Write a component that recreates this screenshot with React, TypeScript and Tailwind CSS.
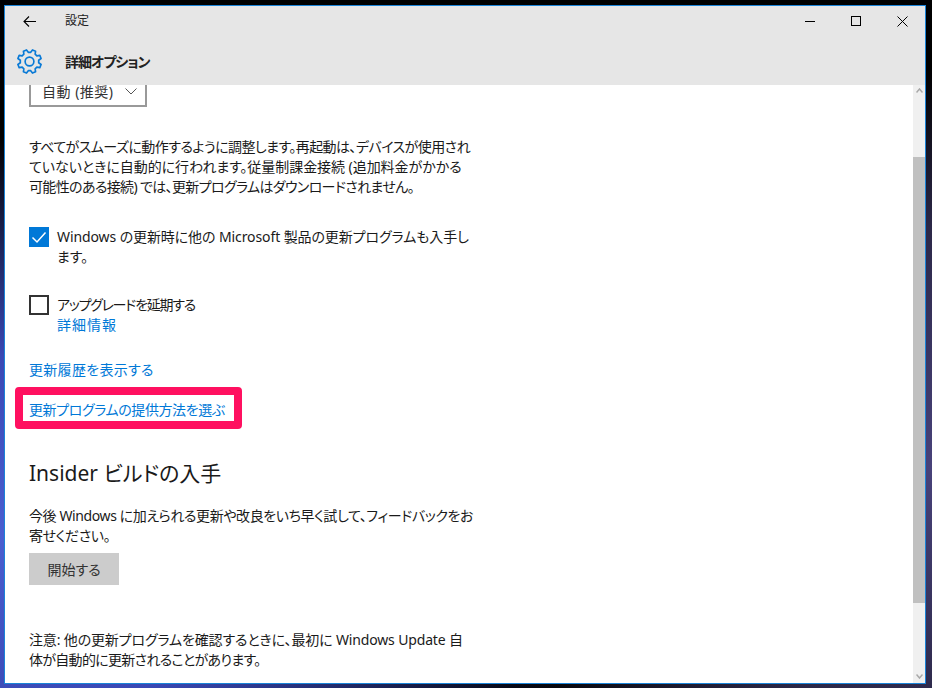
// 8 teeth, each with a flat top
const gearPoints = Array.from({ length: 8 }, (_, i) => {
  const a = i * 45 + 22.5;
  return [
    [a - 15, 8.9],
    [a - 8, 11.5],
    [a + 8, 11.5],
    [a + 15, 8.9],
  ]
    .map(([deg, r]) => {
      const rad = (deg * Math.PI) / 180;
      return `${(12 + r * Math.cos(rad)).toFixed(2)},${(12 + r * Math.sin(rad)).toFixed(2)}`;
    })
    .join(' ');
}).join(' ');

const linkClass = 'block whitespace-nowrap leading-5 text-[#0078d7]';

function Gear() {
  return (
    <svg width="25" height="25" viewBox="0 0 24 24" fill="none" stroke="#0a7ad6" strokeWidth="1.6" strokeLinejoin="round">
      <polygon points={gearPoints} />
      <circle cx="12" cy="12" r="4.2" />
    </svg>
  );
}

function Chevron({ up = false, w = 7, h = 5, color = '#a8a8a8', sw = 1.5 }: { up?: boolean; w?: number; h?: number; color?: string; sw?: number }) {
  return (
    <svg width={w} height={h} viewBox={`0 0 ${w} ${h}`} fill="none" stroke={color} strokeWidth={sw}>
      <polyline points={up ? `0.5,${h - 0.5} ${w / 2},1 ${w - 0.5},${h - 0.5}` : `0.5,0.5 ${w / 2},${h - 1} ${w - 0.5},0.5`} />
    </svg>
  );
}

export default function App() {
  return (
    <div className="h-[688px] w-[932px] overflow-hidden bg-black bg-[radial-gradient(ellipse_600px_400px_at_0%_78%,#4a5ed0_0%,#3a48b4_45%,transparent_100%),radial-gradient(ellipse_500px_400px_at_100%_68%,#48427a_0%,#2c2848_60%,transparent_100%)] pt-[5px] pb-[4px] pl-[4px] pr-[6px] font-['Noto_Sans','Noto_Sans_CJK_JP',sans-serif] text-[14px] text-[#1a1a1a] [font-feature-settings:'palt']">
      <div className="flex h-[679px] w-[922px] flex-col border border-[#1a84d8] bg-white">
        <header className="h-[79px] shrink-0 bg-[#e6e6e6]">
          <div className="flex h-[30px] items-center">
            <div className="flex w-[60px] justify-center pr-[12px] pl-[1px]">
              <svg width="13" height="11" viewBox="0 0 13 11" fill="none" stroke="#000" strokeWidth="1.1">
                <path d="M13 5.5H1M6 0.5L1 5.5L6 10.5" />
              </svg>
            </div>
            <span className="text-[12px] text-[#222]">設定</span>
            <div className="ml-auto flex items-center">
              <div className="flex w-[46px] justify-center">
                <div className="h-px w-[10px] bg-black" />
              </div>
              <div className="flex w-[46px] justify-center">
                <div className="h-[10px] w-[10px] border border-black" />
              </div>
              <div className="flex w-[46px] justify-center">
                <svg width="11" height="11" viewBox="0 0 11 11" stroke="#000" strokeWidth="1">
                  <path d="M0.5 0.5L10.5 10.5M10.5 0.5L0.5 10.5" />
                </svg>
              </div>
            </div>
          </div>
          <div className="mt-[10px] flex h-[30px] items-center">
            <div className="flex w-[60px] justify-center pr-[13px] pl-[1px]">
              <Gear />
            </div>
            <span className="font-bold tracking-[-1px] text-[#222]">詳細オプション</span>
          </div>
        </header>
        <div className="flex min-h-0 flex-1">
          <main className="min-w-0 flex-1 overflow-hidden pl-[24px]">
            <div className="-mt-[10px] flex h-[32px] w-[118px] items-center gap-[11px] border-2 border-[#999] pt-[1px] pl-[11px]">
              <span className="whitespace-nowrap tracking-[0.5px] text-[#333]">自動 (推奨)</span>
              <Chevron w={12} h={7} color="#555" sw={1} />
            </div>
            <p className="mt-[30px] whitespace-nowrap leading-5">
              <span className="tracking-[-0.55px]">すべてがスムーズに動作するように調整します。再起動は、デバイスが使用され</span>
              <br />
              <span className="tracking-[-0.05px]">ていないときに自動的に行われます。従量制課金接続 (追加料金がかかる</span>
              <br />
              <span className="tracking-[-0.65px]">可能性のある接続) では、更新プログラムはダウンロードされません。</span>
            </p>
            <div className="mt-[30px] flex gap-[8px]">
              <div className="flex h-5 w-5 shrink-0 items-center justify-center bg-[#0078d7]">
                <svg width="20" height="20" viewBox="0 0 20 20" fill="none" stroke="#fff" strokeWidth="1.5">
                  <polyline points="3.5,10.5 8,15 16.5,5.5" />
                </svg>
              </div>
              <p className="whitespace-nowrap leading-5 tracking-[-0.1px]">
                Windows の更新時に他の Microsoft 製品の更新プログラムも入手し
                <br />
                ます。
              </p>
            </div>
            <div className="mt-[28px] flex gap-[8px]">
              <div className="h-5 w-5 shrink-0 border-2 border-[#333]" />
              <div>
                <p className="whitespace-nowrap leading-5 tracking-[-1.25px]">アップグレードを延期する</p>
                <a className={`${linkClass} tracking-[1px]`}>詳細情報</a>
              </div>
            </div>
            <a className={`${linkClass} mt-[25px] tracking-[0.3px]`}>更新履歴を表示する</a>
            <div className="relative mt-[20px]">
              <a className={`${linkClass} tracking-[-0.4px]`}>更新プログラムの提供方法を選ぶ</a>
              <div className="absolute -top-[13px] -left-[14px] h-[42px] w-[227px] rounded-[4px] border-[8px] border-[#ff1060]" />
            </div>
            <h2 className="mt-[38px] text-[21px] leading-[30px] text-[#1a1a1a]">Insider ビルドの入手</h2>
            <p className="mt-[18px] whitespace-nowrap leading-5 tracking-[-0.4px]">
              今後 Windows に加えられる更新や改良をいち早く試して、フィードバックをお
              <br />
              寄せください。
            </p>
            <button className="mt-[7px] block h-[32px] w-[90px] bg-[#cccccc] text-[#333]">開始する</button>
            <p className="mt-[45px] whitespace-nowrap leading-5">
              <span className="tracking-[-0.15px]">注意: 他の更新プログラムを確認するときに、最初に Windows Update 自</span>
              <br />
              <span className="tracking-[-0.7px]">体が自動的に更新されることがあります。</span>
            </p>
          </main>
          <aside className="flex w-[12px] shrink-0 flex-col bg-[#f0f0f0]">
            <div className="flex h-[72px] justify-center pt-[3px]">
              <Chevron up />
            </div>
            <div className="h-[446px] bg-[#c0c0c0]" />
            <div className="mt-auto flex justify-center pb-[4px]">
              <Chevron />
            </div>
          </aside>
        </div>
      </div>
    </div>
  );
}
